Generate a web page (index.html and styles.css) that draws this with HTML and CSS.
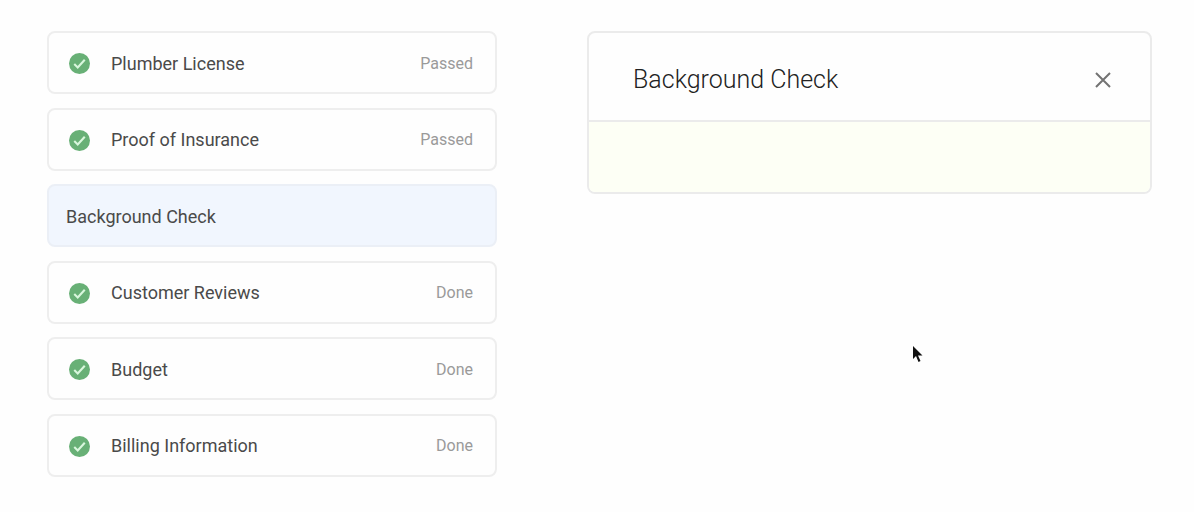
FILE: index.html
```html
<!DOCTYPE html>
<html lang="en">
<head>
    <meta charset="UTF-8">
    <meta name="viewport" content="width=device-width, initial-scale=1.0">
    <title>Background Check</title>
    <link rel="stylesheet" href="styles.css">
</head>
<body>
    <main class="page">
        <nav class="steps">
            <button type="button" class="step">
                <svg class="check" viewBox="0 0 20 20" aria-hidden="true"><circle cx="10" cy="10" r="10"/><path d="M5 10.5l3.3 3.2L15 6.5"/></svg>
                <span class="step-name">Plumber License</span>
                <span class="status">Passed</span>
            </button>
            <button type="button" class="step">
                <svg class="check" viewBox="0 0 20 20" aria-hidden="true"><circle cx="10" cy="10" r="10"/><path d="M5 10.5l3.3 3.2L15 6.5"/></svg>
                <span class="step-name">Proof of Insurance</span>
                <span class="status">Passed</span>
            </button>
            <button type="button" class="step active">
                <span class="step-name">Background Check</span>
            </button>
            <button type="button" class="step">
                <svg class="check" viewBox="0 0 20 20" aria-hidden="true"><circle cx="10" cy="10" r="10"/><path d="M5 10.5l3.3 3.2L15 6.5"/></svg>
                <span class="step-name">Customer Reviews</span>
                <span class="status">Done</span>
            </button>
            <button type="button" class="step">
                <svg class="check" viewBox="0 0 20 20" aria-hidden="true"><circle cx="10" cy="10" r="10"/><path d="M5 10.5l3.3 3.2L15 6.5"/></svg>
                <span class="step-name">Budget</span>
                <span class="status">Done</span>
            </button>
            <button type="button" class="step">
                <svg class="check" viewBox="0 0 20 20" aria-hidden="true"><circle cx="10" cy="10" r="10"/><path d="M5 10.5l3.3 3.2L15 6.5"/></svg>
                <span class="step-name">Billing Information</span>
                <span class="status">Done</span>
            </button>
        </nav>

        <section class="panel">
            <header class="panel-header">
                <h2>Background Check</h2>
                <button type="button" class="close" aria-label="Close">
                    <svg viewBox="0 0 16 16" aria-hidden="true"><path d="M1 1l14 14M15 1L1 15"/></svg>
                </button>
            </header>
            <div class="panel-body"></div>
        </section>
    </main>

    <svg class="pointer" viewBox="0 0 12 18" aria-hidden="true"><path d="M1 1v13l3-3 2.5 6 2-1-2.5-5.5h4.5z"/></svg>
</body>
</html>
```

FILE: styles.css
```css
* {
    box-sizing: border-box;
}
body {
    margin: 0;
    background: #fefefe;
    color: #4a4a4a;
    font-family: Roboto, Arial, sans-serif;
}
.page {
    display: grid;
    grid-template-columns: 450fr 565fr;
    column-gap: 90px;
    min-height: 100vh;
    padding: 31px 42px 35px 47px;
}

/* left column */
.steps {
    display: flex;
    flex-direction: column;
    justify-content: space-between;
    gap: 12px;
}
.step {
    display: flex;
    align-items: center;
    width: 100%;
    min-height: 63px;
    padding: 14px 22px 12px 20px;
    border: 2px solid #eeeeee;
    border-radius: 8px;
    background: #fefefe;
    color: inherit;
    font-family: inherit;
    font-size: 18px;
    line-height: 24px;
    text-align: left;
    cursor: pointer;
}
.step.active {
    padding-left: 17px;
    border-color: #ebeff6;
    background: #f1f6fe;
}
.check {
    width: 21px;
    height: 21px;
    margin-right: 21px;
}
.check circle {
    fill: #68b076;
}
.check path {
    fill: none;
    stroke: #d9f7dd;
    stroke-width: 2;
}
.step-name {
    flex: 1;
}
.status {
    color: #9a9a9a;
    font-size: 16px;
}

/* right column */
.panel {
    align-self: start;
    overflow: hidden;
    border: 2px solid #ebebeb;
    border-radius: 8px;
}
.panel-header {
    display: flex;
    align-items: center;
    justify-content: space-between;
    padding: 29px 37px 22px 44px;
    border-bottom: 2px solid #ebebeb;
}
.panel-header h2 {
    margin: 0;
    color: #222;
    font-size: 25px;
    font-weight: 300;
    line-height: 36px;
}
.close {
    display: flex;
    padding: 2px;
    border: none;
    background: none;
    cursor: pointer;
}
.close svg {
    width: 16px;
    height: 16px;
}
.close path {
    fill: none;
    stroke: #737373;
    stroke-width: 2;
}
.panel-body {
    min-height: 70px;
    background: #fdfff5;
}

.pointer {
    position: absolute;
    top: 345px;
    left: 912px;
    width: 12px;
    height: 18px;
    fill: #111;
}
```
